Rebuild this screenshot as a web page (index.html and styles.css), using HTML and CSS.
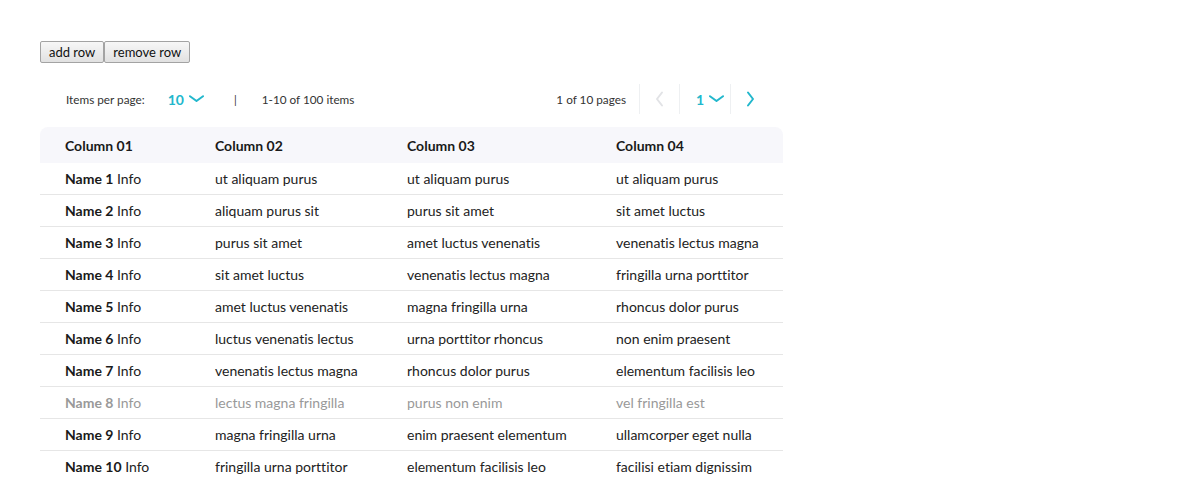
FILE: index.html
```html
<!DOCTYPE html>
<html>
<head>
<meta charset="utf-8">
<link rel="stylesheet" href="styles.css">
</head>
<body>
<div class="page">
  <div class="actions">
    <button class="btn">add row</button><button class="btn">remove row</button>
  </div>
  <div class="pager">
    <div class="pager-left">
      <span class="label">Items per page:</span>
      <span class="select">10 <svg width="15" height="8" viewBox="0 0 15 8"><path d="M1 1.2 L7.5 6 L14 1.2" fill="none" stroke="#22b7cc" stroke-width="2" stroke-linecap="round" stroke-linejoin="round"/></svg></span>
      <span class="sep">|</span>
      <span class="label">1-10 of 100 items</span>
    </div>
    <div class="pager-right">
      <span class="label">1 of 10 pages</span>
      <span class="cell nav"><svg width="9" height="16" viewBox="0 0 9 16"><path d="M7 1.5 L2 8 L7 14.5" fill="none" stroke="#e2e3e6" stroke-width="2" stroke-linecap="round" stroke-linejoin="round"/></svg></span>
      <span class="cell pg"><span class="select">1 <svg width="15" height="8" viewBox="0 0 15 8"><path d="M1 1.2 L7.5 6 L14 1.2" fill="none" stroke="#22b7cc" stroke-width="2" stroke-linecap="round" stroke-linejoin="round"/></svg></span></span>
      <span class="cell nav"><svg width="9" height="16" viewBox="0 0 9 16"><path d="M2 1.5 L7 8 L2 14.5" fill="none" stroke="#22b7cc" stroke-width="2" stroke-linecap="round" stroke-linejoin="round"/></svg></span>
    </div>
  </div>
  <table class="grid">
    <colgroup><col class="c1"><col class="c2"><col class="c3"><col class="c4"></colgroup>
    <thead>
      <tr><th>Column 01</th><th>Column 02</th><th>Column 03</th><th>Column 04</th></tr>
    </thead>
    <tbody>
      <tr><td><b>Name 1</b> Info</td><td>ut aliquam purus</td><td>ut aliquam purus</td><td>ut aliquam purus</td></tr>
      <tr><td><b>Name 2</b> Info</td><td>aliquam purus sit</td><td>purus sit amet</td><td>sit amet luctus</td></tr>
      <tr><td><b>Name 3</b> Info</td><td>purus sit amet</td><td>amet luctus venenatis</td><td>venenatis lectus magna</td></tr>
      <tr><td><b>Name 4</b> Info</td><td>sit amet luctus</td><td>venenatis lectus magna</td><td>fringilla urna porttitor</td></tr>
      <tr><td><b>Name 5</b> Info</td><td>amet luctus venenatis</td><td>magna fringilla urna</td><td>rhoncus dolor purus</td></tr>
      <tr><td><b>Name 6</b> Info</td><td>luctus venenatis lectus</td><td>urna porttitor rhoncus</td><td>non enim praesent</td></tr>
      <tr><td><b>Name 7</b> Info</td><td>venenatis lectus magna</td><td>rhoncus dolor purus</td><td>elementum facilisis leo</td></tr>
      <tr class="disabled"><td><b>Name 8</b> Info</td><td>lectus magna fringilla</td><td>purus non enim</td><td>vel fringilla est</td></tr>
      <tr><td><b>Name 9</b> Info</td><td>magna fringilla urna</td><td>enim praesent elementum</td><td>ullamcorper eget nulla</td></tr>
      <tr><td><b>Name 10</b> Info</td><td>fringilla urna porttitor</td><td>elementum facilisis leo</td><td>facilisi etiam dignissim</td></tr>
    </tbody>
  </table>
</div>
</body>
</html>
```

FILE: styles.css
```css
html, body {
  margin: 0;
  padding: 0;
  background: #fff;
}
body {
  font-family: Lato, "Liberation Sans", sans-serif;
  color: #222;
  font-variant-ligatures: none;
}
.page {
  padding: 41px 0 0 40px;
  width: 743px;
}
.actions {
  display: flex;
  height: 22px;
}
.btn {
  font-family: Lato, "Liberation Sans", sans-serif;
  font-size: 13px;
  color: #111;
  height: 22px;
  padding: 0 8px;
  margin: 0;
  border: 1px solid #a3a3a3;
  border-radius: 2px;
  background: linear-gradient(#f7f7f7, #e1e1e1);
  line-height: 20px;
}
.pager {
  margin-top: 21px;
  height: 30px;
  display: flex;
  align-items: center;
  justify-content: space-between;
}
.pager-left {
  display: flex;
  align-items: center;
  padding-left: 26px;
}
.label {
  font-size: 11.75px;
  color: #333;
}
.select {
  display: inline-flex;
  align-items: center;
  gap: 5px;
  font-size: 14px;
  font-weight: 700;
  color: #22b7cc;
}
.pager-left .select {
  margin-left: 23px;
}
.sep {
  font-size: 11px;
  color: #333;
  margin-left: 30px;
  margin-right: 25px;
}
.pager-right {
  display: flex;
  align-items: center;
  height: 30px;
  padding-right: 13px;
}
.pager-right .label {
  margin-right: 13px;
}
.cell {
  height: 30px;
  display: flex;
  align-items: center;
  justify-content: center;
  border-left: 1px solid #eef0f2;
}
.nav {
  width: 39px;
}
.cell.pg {
  width: 51px;
  box-sizing: border-box;
  justify-content: flex-start;
  padding-left: 16px;
}
.grid {
  margin-top: 13px;
  width: 743px;
  border-collapse: separate;
  border-spacing: 0;
  table-layout: fixed;
  font-size: 14px;
}
.c1 { width: 150px; }
.c2 { width: 192px; }
.c3 { width: 209px; }
.c4 { width: 192px; }
.grid th {
  background: #f7f7fb;
  height: 36px;
  padding: 0 0 0 25px;
  text-align: left;
  font-weight: 700;
  color: #1a1a1a;
}
.grid th:first-child { border-top-left-radius: 8px; }
.grid th:last-child { border-top-right-radius: 8px; }
.grid td {
  height: 31px;
  padding: 0 0 0 25px;
  border-bottom: 1px solid #e6e6e6;
  color: #222;
  white-space: nowrap;
}
.grid tr:last-child td {
  border-bottom: none;
}
.grid b { font-weight: 700; color: #1a1a1a; }
.grid tr.disabled td, .grid tr.disabled b {
  color: #999;
}
```
